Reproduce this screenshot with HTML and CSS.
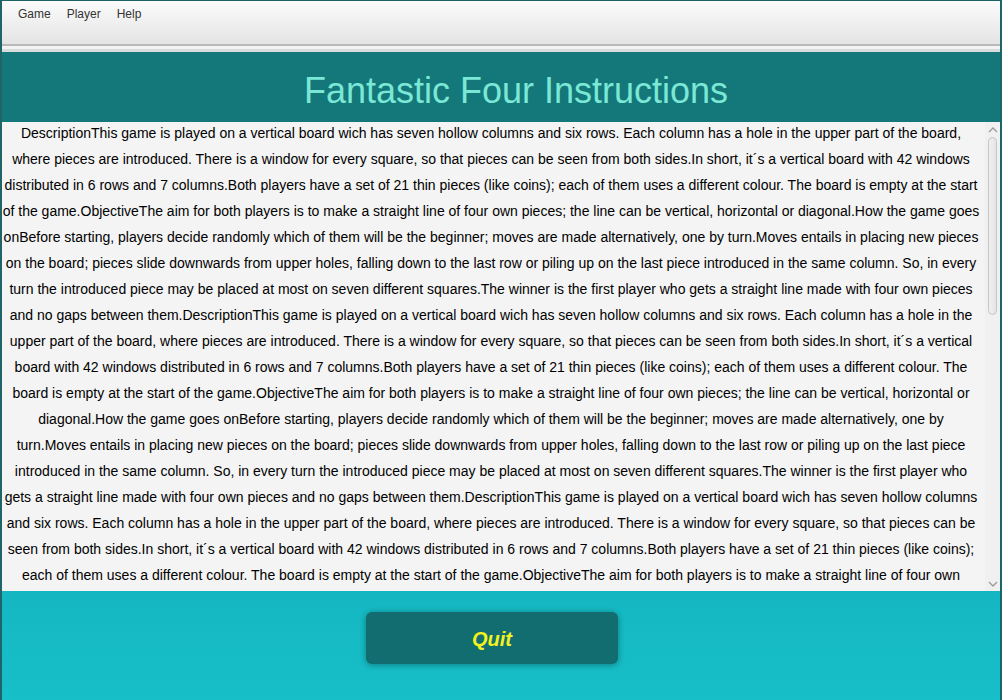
FILE: index.html
```html
<!DOCTYPE html>
<html>
<head>
<meta charset="utf-8">
<link rel="stylesheet" href="styles.css">
</head>
<body>
<div class="window">
  <div class="menubar">
    <span class="menu-item">Game</span>
    <span class="menu-item">Player</span>
    <span class="menu-item">Help</span>
  </div>
  <div class="menu-gap"></div>
  <div class="header">
    <h1 class="title">Fantastic Four Instructions</h1>
  </div>
  <div class="content">
    <div class="text">
      DescriptionThis game is played on a vertical board wich has seven hollow columns and six rows. Each column has a hole in the upper part of the board,<br>
      where pieces are introduced. There is a window for every square, so that pieces can be seen from both sides.In short, it´s a vertical board with 42 windows<br>
      distributed in 6 rows and 7 columns.Both players have a set of 21 thin pieces (like coins); each of them uses a different colour. The board is empty at the start<br>
      of the game.ObjectiveThe aim for both players is to make a straight line of four own pieces; the line can be vertical, horizontal or diagonal.How the game goes<br>
      onBefore starting, players decide randomly which of them will be the beginner; moves are made alternatively, one by turn.Moves entails in placing new pieces<br>
      on the board; pieces slide downwards from upper holes, falling down to the last row or piling up on the last piece introduced in the same column. So, in every<br>
      turn the introduced piece may be placed at most on seven different squares.The winner is the first player who gets a straight line made with four own pieces<br>
      and no gaps between them.DescriptionThis game is played on a vertical board wich has seven hollow columns and six rows. Each column has a hole in the<br>
      upper part of the board, where pieces are introduced. There is a window for every square, so that pieces can be seen from both sides.In short, it´s a vertical<br>
      board with 42 windows distributed in 6 rows and 7 columns.Both players have a set of 21 thin pieces (like coins); each of them uses a different colour. The<br>
      board is empty at the start of the game.ObjectiveThe aim for both players is to make a straight line of four own pieces; the line can be vertical, horizontal or<br>
      diagonal.How the game goes onBefore starting, players decide randomly which of them will be the beginner; moves are made alternatively, one by<br>
      turn.Moves entails in placing new pieces on the board; pieces slide downwards from upper holes, falling down to the last row or piling up on the last piece<br>
      introduced in the same column. So, in every turn the introduced piece may be placed at most on seven different squares.The winner is the first player who<br>
      gets a straight line made with four own pieces and no gaps between them.DescriptionThis game is played on a vertical board wich has seven hollow columns<br>
      and six rows. Each column has a hole in the upper part of the board, where pieces are introduced. There is a window for every square, so that pieces can be<br>
      seen from both sides.In short, it´s a vertical board with 42 windows distributed in 6 rows and 7 columns.Both players have a set of 21 thin pieces (like coins);<br>
      each of them uses a different colour. The board is empty at the start of the game.ObjectiveThe aim for both players is to make a straight line of four own
    </div>
    <div class="scrollbar">
      <svg class="arrow" width="10" height="6" viewBox="0 0 10 6"><path d="M1 5 L5 1 L9 5" fill="none" stroke="#9a9a9a" stroke-width="1.3"/></svg>
      <div class="track"><div class="thumb"></div></div>
      <svg class="arrow" width="10" height="6" viewBox="0 0 10 6"><path d="M1 1 L5 5 L9 1" fill="none" stroke="#9a9a9a" stroke-width="1.3"/></svg>
    </div>
  </div>
  <div class="footer">
    <button class="quit">Quit</button>
  </div>
</div>
</body>
</html>
```

FILE: styles.css
```css
html, body {
  margin: 0;
  padding: 0;
}
body {
  width: 1002px;
  height: 700px;
  overflow: hidden;
  font-family: "Liberation Sans", Arial, sans-serif;
}
.window {
  box-sizing: border-box;
  width: 1002px;
  height: 700px;
  border-top: 1px solid #1d6466;
  border-left: 2px solid #1f6467;
  border-right: 2px solid #1f6467;
  display: flex;
  flex-direction: column;
  background: #14777a;
}
.menubar {
  height: 45px;
  box-sizing: border-box;
  background: linear-gradient(#fbfbfb, #e4e4e4);
  border-bottom: 2px solid #b9b9b9;
  display: flex;
  align-items: flex-start;
  padding: 5px 0 0 8px;
}
.menu-item {
  font-family: "Liberation Sans", Arial, sans-serif;
  font-size: 12px;
  color: #333;
  padding: 0 8px;
  line-height: 16px;
}
.menu-gap {
  height: 3px;
  background: #f3f3f3;
  border-bottom: 3px solid #d8dcdc;
}
.header {
  height: 70px;
  background: #14777a;
  display: flex;
  align-items: center;
  justify-content: center;
}
.title {
  margin: 0;
  font-weight: normal;
  font-size: 36px;
  color: #7be8d6;
  font-family: "Liberation Sans", Arial, sans-serif;
  padding: 8px 0 0 30px;
}
.content {
  height: 469px;
  background: #f4f4f4;
  display: flex;
  overflow: hidden;
}
.text {
  flex: 1;
  font-size: 14px;
  line-height: 26px;
  color: #000;
  text-align: center;
  white-space: nowrap;
  overflow: hidden;
  margin-top: -2px;
  padding-right: 5px;
}
.scrollbar {
  width: 15px;
  display: flex;
  flex-direction: column;
  align-items: center;
  background: #f0f0f0;
  padding: 3px 0 2px;
  box-sizing: border-box;
}
.arrow {
  flex: none;
  margin: 2px 0;
}
.track {
  flex: 1;
  width: 100%;
  display: flex;
  justify-content: center;
  padding-top: 2px;
}
.thumb {
  width: 9px;
  height: 178px;
  box-sizing: border-box;
  border: 1px solid #c6c6c6;
  border-radius: 5px;
  background: linear-gradient(90deg, #f0f0f0, #e4e4e4);
}
.footer {
  flex: 1;
  background: linear-gradient(#14b7c1, #17bfc9);
  display: flex;
  justify-content: center;
  align-items: flex-start;
  padding-top: 21px;
}
.quit {
  width: 252px;
  height: 52px;
  margin-left: -18px;
  border: none;
  border-radius: 6px;
  background: #126d71;
  box-shadow: 0 1px 6px rgba(0, 0, 0, 0.35);
  color: #f2f21c;
  font-family: "Liberation Sans", Arial, sans-serif;
  font-weight: bold;
  font-style: italic;
  font-size: 20px;
  padding: 2px 0 0;
}
```
